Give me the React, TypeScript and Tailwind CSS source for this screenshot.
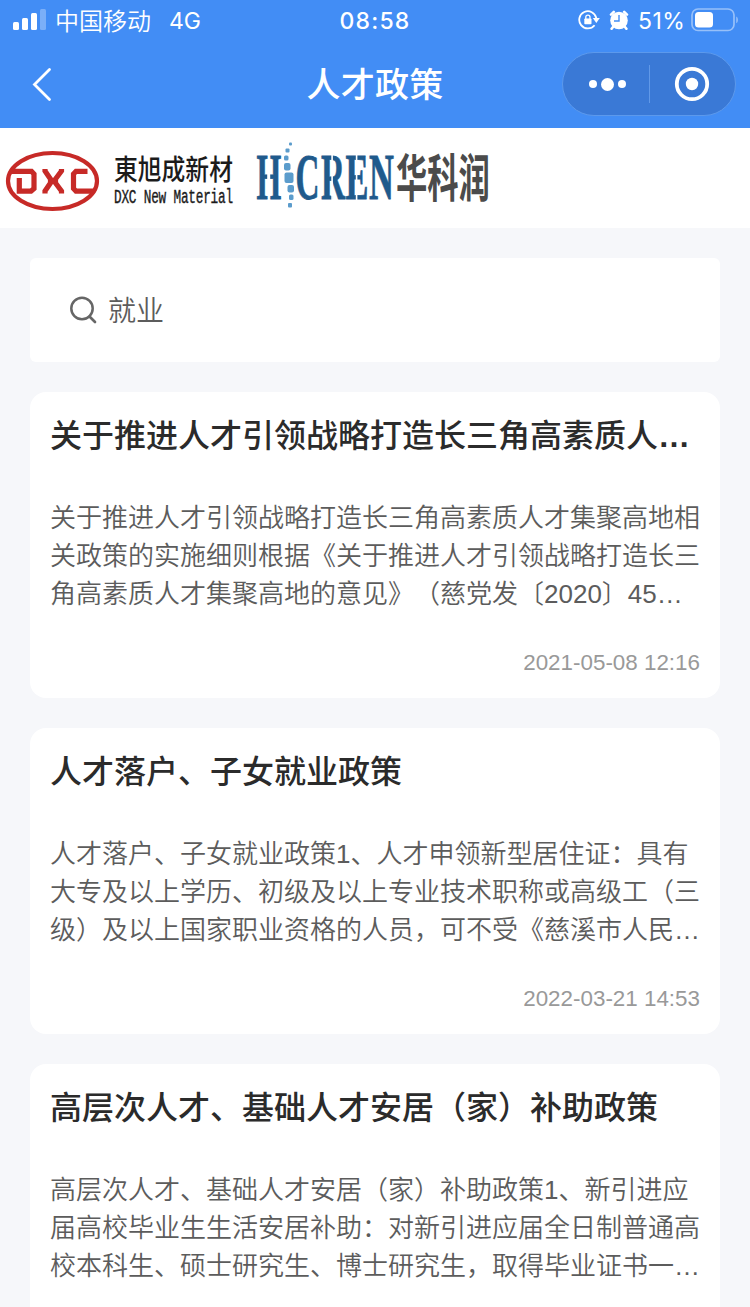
import React from "react";

type Policy = {
  title: string;
  clipped?: boolean;
  lines: string[];
  date?: string;
};

const policies: Policy[] = [
  {
    title: "关于推进人才引领战略打造长三角高素质人",
    clipped: true,
    lines: [
      "关于推进人才引领战略打造长三角高素质人才集聚高地相",
      "关政策的实施细则根据《关于推进人才引领战略打造长三",
      "角高素质人才集聚高地的意见》（慈党发〔2020〕45…",
    ],
    date: "2021-05-08 12:16",
  },
  {
    title: "人才落户、子女就业政策",
    lines: [
      "人才落户、子女就业政策1、人才申领新型居住证：具有",
      "大专及以上学历、初级及以上专业技术职称或高级工（三",
      "级）及以上国家职业资格的人员，可不受《慈溪市人民…",
    ],
    date: "2022-03-21 14:53",
  },
  {
    title: "高层次人才、基础人才安居（家）补助政策",
    lines: [
      "高层次人才、基础人才安居（家）补助政策1、新引进应",
      "届高校毕业生生活安居补助：对新引进应届全日制普通高",
      "校本科生、硕士研究生、博士研究生，取得毕业证书一…",
    ],
  },
];

const StatusBar = () => (
  <div className="flex h-10 items-center text-white">
    <div className="flex w-[300px] items-center pl-[13px]">
      <svg width="34" height="22" viewBox="0 0 34 22" fill="white">
        <rect x="0" y="13" width="6" height="8" rx="1.5" />
        <rect x="9" y="9" width="6" height="12" rx="1.5" />
        <rect x="18" y="4" width="6" height="17" rx="1.5" />
        <rect x="27" y="0" width="6" height="21" rx="1.5" opacity="0.3" />
      </svg>
      <span className="ml-2 pt-[3px] text-[24px] font-[350] leading-10">
        中国移动
      </span>
      <span className="ml-[18px] pt-[2px] font-[Inter,sans-serif] text-[23px] leading-10">
        4G
      </span>
    </div>
    <div className="w-[150px] pt-[2px] text-center font-[Inter,sans-serif] text-[23px] font-medium leading-10 tracking-[1.2px]">
      08:58
    </div>
    <div className="flex flex-1 items-center pl-[128px]">
      <svg width="22" height="20" viewBox="0 0 22 20" fill="none">
        <path
          d="M16.6 15.2A8.6 8.6 0 1 1 18.3 8.2"
          stroke="white"
          strokeWidth="1.8"
        />
        <path d="M14.8 8h7l-3.5 5z" fill="white" />
        <rect x="6.3" y="8.4" width="7.2" height="5.8" rx="0.8" fill="white" />
        <path
          d="M7.8 9V7.3a2.1 2.1 0 0 1 4.2 0V9"
          stroke="white"
          strokeWidth="1.3"
        />
      </svg>
      <svg className="ml-[9px]" width="20" height="20" viewBox="0 0 20 20">
        <circle cx="10" cy="10.5" r="8.8" fill="white" />
        <path
          d="M2 4.6 4.8 1.8M15.2 1.8 18 4.6M4 17l-1.4 1.8M16 17l1.4 1.8"
          stroke="white"
          strokeWidth="2.6"
          strokeLinecap="round"
        />
        <path d="M10 5v6H5" fill="none" stroke="#428df5" strokeWidth="1.4" />
      </svg>
      <span className="ml-[9px] pt-[2px] font-[Inter,sans-serif] text-[23px] leading-10 tracking-[0.5px]">
        51%
      </span>
      <svg
        className="ml-[6px] shrink-0"
        width="48"
        height="24"
        viewBox="0 0 48 24"
      >
        <rect
          x="1"
          y="1"
          width="42"
          height="21.5"
          rx="6"
          fill="none"
          stroke="white"
          strokeOpacity="0.45"
          strokeWidth="1.7"
        />
        <rect x="4" y="4" width="18" height="15.5" rx="3.5" fill="white" />
        <path d="M45.3 8.5c2 .8 2 6 0 6.8z" fill="white" opacity="0.5" />
      </svg>
    </div>
  </div>
);

const TitleBar = () => (
  <div className="flex h-[88px] items-center text-white">
    <div className="w-[250px] pl-[31px]">
      <svg width="22" height="36" viewBox="0 0 22 36" fill="none">
        <path
          d="M18.5 3.5 3.5 18.5 18.5 33.5"
          stroke="white"
          strokeWidth="2.8"
          strokeLinecap="round"
        />
      </svg>
    </div>
    <h1 className="w-[250px] pt-[2px] text-center text-[34px] font-medium leading-[48px] tracking-[0.3px]">
      人才政策
    </h1>
    <div className="flex flex-1 justify-end pr-[14px]">
      <div className="flex h-16 w-[174px] items-center rounded-full border border-[#5c99ec] bg-[#3a79d6]">
        <div className="flex w-[86px] items-center justify-center gap-1 pl-[3px]">
          <span className="size-2 rounded-full bg-white" />
          <span className="size-[13px] rounded-full bg-white" />
          <span className="size-2 rounded-full bg-white" />
        </div>
        <span className="h-[38px] w-px bg-[#6199e8]" />
        <div className="flex flex-1 justify-center pr-[2px]">
          <svg width="36" height="36" viewBox="0 0 36 36">
            <circle
              cx="18"
              cy="18"
              r="15.2"
              fill="none"
              stroke="white"
              strokeWidth="3.8"
            />
            <circle cx="18" cy="18" r="6.2" fill="white" />
          </svg>
        </div>
      </div>
    </div>
  </div>
);

const DxcLogo = () => (
  <svg width="240" height="100" viewBox="0 0 240 100">
    <ellipse
      cx="52.5"
      cy="53"
      rx="44.5"
      ry="28"
      fill="none"
      stroke="#c72a27"
      strokeWidth="4.2"
    />
    <g fill="none" stroke="#c72a27" strokeWidth="5.2">
      <path d="M11 43.3H31.5L34 46V60.5L31 63.2H19.3V50" />
      <path d="M45 41V43L50.5 51V55L45 63V65.5M61.5 41V43L55.5 51V55L61.5 63V65.5M49 53H57" />
      <path d="M87.5 43.3H76L73.5 46V60.5L76 63.2H93" />
    </g>
    <text
      transform="translate(114 51.5) scale(0.85 1)"
      fontSize="28"
      fontWeight="500"
      fill="#1b1b1b"
    >
      東旭成新材
    </text>
    <text
      transform="translate(114 75) scale(0.652 1)"
      fontSize="19.5"
      fontFamily="Liberation Mono, monospace"
      letterSpacing="-0.3"
      fill="#1b1b1b"
      stroke="#1b1b1b"
      strokeWidth="0.4"
    >
      DXC New Material
    </text>
  </svg>
);

const HicrenLogo = () => (
  <svg width="260" height="100" viewBox="240 0 260 100">
    <g
      fill="#1f5a8c"
      stroke="#1f5a8c"
      strokeWidth="0.8"
      fontSize="65"
      fontWeight="bold"
      fontFamily="Liberation Serif, serif"
    >
      <text transform="translate(256.5 71) scale(0.49 1)">H</text>
      <text transform="translate(295.5 71) scale(0.51 1)">C</text>
      <text transform="translate(321 71) scale(0.51 1)">R</text>
      <text transform="translate(345.5 71) scale(0.53 1)">E</text>
      <text transform="translate(369 71) scale(0.53 1)">N</text>
    </g>
    {/* stencil cuts through the letters */}
    <g fill="white">
      <rect x="267.2" y="44" width="3" height="14" />
      <rect x="331.3" y="27" width="1.6" height="46" />
      <rect x="355.8" y="27" width="1.6" height="46" />
    </g>
    {/* spine standing in for the letter I */}
    <g fill="#5b9ccc">
      <rect x="289" y="14.5" width="3" height="3" rx="1" />
      <rect x="285.5" y="20.5" width="4" height="4" rx="1" />
      <rect x="284" y="27.5" width="4.5" height="5" rx="1.5" />
      <rect x="284" y="35" width="6.5" height="7.5" rx="2" />
      <rect x="284.5" y="44.5" width="9" height="10.5" rx="2" />
      <rect x="287.5" y="57" width="6.5" height="7.5" rx="2" />
      <rect x="289" y="66.5" width="4.5" height="5.5" rx="1.5" />
      <rect x="288" y="75" width="4" height="4.5" rx="1" />
    </g>
    <text
      transform="translate(396 69) scale(0.614 1)"
      fontSize="51"
      fontWeight="bold"
      fill="#4b4b4b"
    >
      华科润
    </text>
  </svg>
);

const SearchBox = () => (
  <div className="flex h-[104px] items-center rounded-md bg-white pl-[39px]">
    <svg width="30" height="30" viewBox="0 0 30 30" fill="none">
      <circle cx="13" cy="13.5" r="10.7" stroke="#666" strokeWidth="2.5" />
      <path
        d="M20.5 21.5 26 27"
        stroke="#666"
        strokeWidth="2.7"
        strokeLinecap="round"
      />
    </svg>
    <span className="ml-[9px] pt-1 text-[28px] font-[350] leading-10 text-[#5c5c5c]">
      就业
    </span>
  </div>
);

const PolicyCard = ({ policy }: { policy: Policy }) => (
  <article className="h-[306px] shrink-0 rounded-2xl bg-white px-5 pt-5">
    <h2 className="whitespace-nowrap text-[32px] font-medium leading-[48px] text-[#2b2b2b]">
      {policy.title}
      {policy.clipped && <span className="font-bold">…</span>}
    </h2>
    <div className="mt-[39px] text-[26px] font-[350] leading-[38px] text-[#5c5c5c] [text-spacing-trim:space-all]">
      {policy.lines.map((line) => (
        <p key={line} className="whitespace-nowrap">
          {line}
        </p>
      ))}
    </div>
    {policy.date && (
      <p className="mt-[33px] text-right text-[22.4px] leading-[34px] text-[#999]">
        {policy.date}
      </p>
    )}
  </article>
);

const App = () => {
  return (
    <div className="h-[1307px] w-[750px] overflow-hidden bg-[#f6f7fa] font-['Liberation_Sans','Noto_Sans_CJK_SC',sans-serif]">
      <header className="h-32 bg-[#428df5]">
        <StatusBar />
        <TitleBar />
      </header>
      <div className="flex h-[100px] bg-white">
        <DxcLogo />
        <HicrenLogo />
      </div>
      <main className="flex flex-col gap-[30px] p-[30px]">
        <SearchBox />
        {policies.map((policy) => (
          <PolicyCard key={policy.title} policy={policy} />
        ))}
      </main>
    </div>
  );
};

export default App;
